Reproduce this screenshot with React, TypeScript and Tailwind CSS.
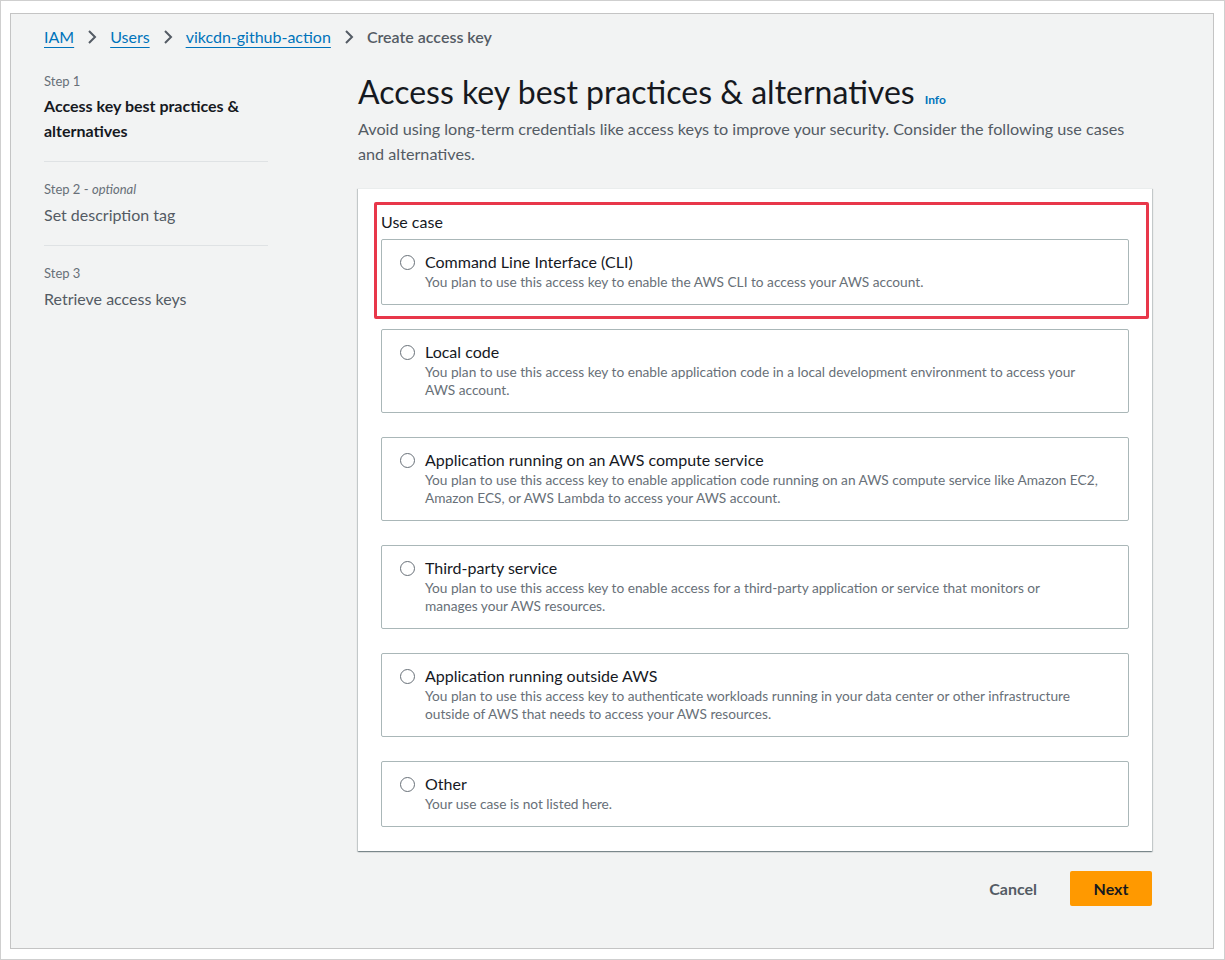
const options = [
  {
    title: "Command Line Interface (CLI)",
    desc: "You plan to use this access key to enable the AWS CLI to access your AWS account.",
  },
  {
    title: "Local code",
    desc: "You plan to use this access key to enable application code in a local development environment to access your AWS account.",
  },
  {
    title: "Application running on an AWS compute service",
    desc: "You plan to use this access key to enable application code running on an AWS compute service like Amazon EC2, Amazon ECS, or AWS Lambda to access your AWS account.",
  },
  {
    title: "Third-party service",
    desc: "You plan to use this access key to enable access for a third-party application or service that monitors or\nmanages your AWS resources.",
  },
  {
    title: "Application running outside AWS",
    desc: "You plan to use this access key to authenticate workloads running in your data center or other infrastructure outside of AWS that needs to access your AWS resources.",
  },
  {
    title: "Other",
    desc: "Your use case is not listed here.",
  },
];

const Chevron = () => (
  <svg width="12" height="16" viewBox="0 0 12 16" className="mx-[12px]">
    <path d="M3 2 L9 8 L3 14" fill="none" stroke="#545b64" strokeWidth="2" />
  </svg>
);

export default function App() {
  return (
    <div className="w-[1225px] h-[960px] bg-white border border-[#cfcfcf] pt-[12px] pl-[9px] [font-family:Lato,'Liberation_Sans',sans-serif]">
      <div className="w-[1204px] h-[936px] bg-[#f2f3f3] border border-[#c4c4c4] pl-[33px] pt-[11px]">
        {/* Breadcrumb */}
        <nav className="flex items-center h-[24px] text-[16px] leading-[24px]">
          <a className="text-[#0073bb] underline underline-offset-[4px] decoration-[1px]">IAM</a>
          <Chevron />
          <a className="text-[#0073bb] underline underline-offset-[4px] decoration-[1px]">Users</a>
          <Chevron />
          <a className="text-[#0073bb] underline underline-offset-[4px] decoration-[1px]">vikcdn-github-action</a>
          <Chevron />
          <span className="text-[#545b64] font-semibold">Create access key</span>
        </nav>

        <div className="flex gap-[90px]">
          {/* Steps */}
          <aside className="w-[224px] pt-[22px] shrink-0">
            <div className="text-[13px] leading-[20px] text-[#687078]">Step 1</div>
            <div className="mt-[2px] text-[16px] leading-[25px] font-bold text-[#16191f]">
              Access key best practices &amp; alternatives
            </div>
            <div className="mt-[18px] border-t border-[#dfe2e4]" />
            <div className="mt-[17px] text-[13px] leading-[20px] text-[#687078]">
              Step 2 - <i>optional</i>
            </div>
            <div className="mt-[3px] text-[16px] leading-[25px] text-[#545b64]">Set description tag</div>
            <div className="mt-[18px] border-t border-[#dfe2e4]" />
            <div className="mt-[17px] text-[13px] leading-[20px] text-[#687078]">Step 3</div>
            <div className="mt-[3px] text-[16px] leading-[25px] text-[#545b64]">Retrieve access keys</div>
          </aside>

          {/* Main */}
          <main className="w-[794px] pt-[25px]">
            <h1 className="flex items-baseline gap-[10px] h-[36px] text-[32px] leading-[36px] text-[#16191f]">
              Access key best practices &amp; alternatives
              <span className="text-[12px] leading-none font-bold text-[#0073bb]">Info</span>
            </h1>
            <p className="mt-[6px] text-[16.2px] leading-[25px] text-[#545b64] pr-[20px]">
              Avoid using long-term credentials like access keys to improve your security. Consider the following use cases and alternatives.
            </p>

            <section className="relative mt-[22px] bg-white border-t border-[#eaeded] shadow-[0_1px_1px_0_rgba(0,28,36,0.3),1px_1px_1px_0_rgba(0,28,36,0.15),-1px_1px_1px_0_rgba(0,28,36,0.15)] px-[23px] pt-[22px] pb-[24px]">
              <div className="text-[16px] leading-[22px] text-[#16191f] mb-[6px]">Use case</div>
              <div className="flex flex-col gap-[24px]">
                {options.map((o) => (
                  <label
                    key={o.title}
                    className="flex items-start border border-[#aab7b8] rounded-[2px] pl-[18px] pr-[30px] pt-[11px] pb-[13px]"
                  >
                    <span className="mt-[4px] w-[15px] h-[15px] rounded-full border-[1.5px] border-[#687078] bg-white shrink-0" />
                    <span className="ml-[10px] flex flex-col">
                      <span className="text-[16px] leading-[22px] text-[#16191f]">{o.title}</span>
                      <span className="text-[13.7px] leading-[18px] text-[#687078] whitespace-pre-line">{o.desc}</span>
                    </span>
                  </label>
                ))}
              </div>
              {/* annotation highlight */}
              <div className="absolute left-[16px] top-[13px] w-[775px] h-[117px] border-[3px] border-[#e8374a] rounded-[2px] pointer-events-none" />
            </section>

            <div className="flex justify-end items-center mt-[20px] gap-[13px]">
              <button className="px-[20px] h-[35px] text-[16px] font-bold text-[#545b64]">Cancel</button>
              <button className="w-[82px] h-[35px] rounded-[2px] bg-[#ff9900] text-[16px] font-bold text-[#16191f]">
                Next
              </button>
            </div>
          </main>
        </div>
      </div>
    </div>
  );
}
